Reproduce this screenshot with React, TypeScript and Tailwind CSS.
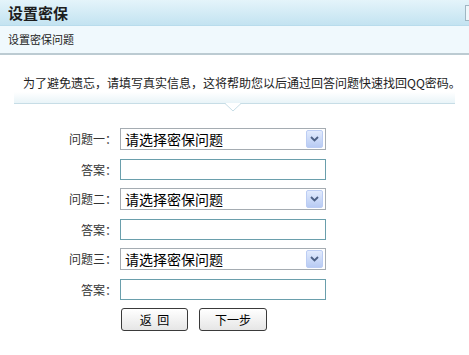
import React from 'react'

const FONT = '"SimSun", "Noto Sans CJK SC", "Liberation Sans", sans-serif'

const QUESTIONS = ['问题一：', '问题二：', '问题三：']

function FakeSelect() {
  return (
    <div className="flex h-[22px] w-[206px] items-center border border-[#a5acb2] bg-white pl-[4px] pr-[2px]">
      <span className="flex-1 text-[14px] leading-none text-black">请选择密保问题</span>
      <span className="flex h-[18px] w-[17px] items-center justify-center rounded-[2px] border border-[#bccdf4] bg-gradient-to-b from-[#e2ebfd] to-[#b8cbf3]">
        <svg width="9" height="6" viewBox="0 0 9 6">
          <path d="M1 1 L4.5 4.5 L8 1" fill="none" stroke="#4d6185" strokeWidth="1.8" />
        </svg>
      </span>
    </div>
  )
}

function Row({ label, children }: { label: string; children: React.ReactNode }) {
  return (
    <div className="flex items-center">
      <span className="w-[118px] pr-[1px] text-right text-[12px] leading-none text-[#333]">{label}</span>
      <div className="ml-[2px]">{children}</div>
    </div>
  )
}

export default function App() {
  return (
    <div className="h-[355px] w-[469px] overflow-hidden bg-white" style={{ fontFamily: FONT }}>
      <div className="flex h-[26px] items-center overflow-hidden border-b border-[#b9dcec] bg-gradient-to-b from-[#e4f4fa] to-[#c3e3f1] pl-[8px]">
        <span className="text-[15px] font-bold leading-none text-[#1d1d1d]">设置密保</span>
        <span className="ml-auto mr-[-16px] h-[16px] w-[20px] border border-[#9fb6c2] bg-[#eef7fb]" />
      </div>
      <div className="flex h-[29px] items-center border-b-2 border-[#bccbd2] bg-[#f0f9fd] pl-[8px]">
        <span className="text-[11px] leading-none text-[#222]">设置密保问题</span>
      </div>

      <p className="mt-[22px] whitespace-nowrap pl-[23px] text-[12px] leading-none text-[#222]">
        为了避免遗忘，请填写真实信息，这将帮助您以后通过回答问题快速找回QQ密码。
      </p>
      <div className="relative mx-[14px] mt-[3px] h-[12px] border-b border-[#c7dde6] bg-gradient-to-b from-white to-[#e9f4f8]">
        <svg className="absolute left-[211px] top-[11px]" width="16" height="9" viewBox="0 0 16 9">
          <path d="M0 0.5 L8 8 L16 0.5" fill="white" stroke="#c7dde6" strokeWidth="1" />
          <rect x="1" y="0" width="14" height="1" fill="white" />
        </svg>
      </div>

      <div className="mt-[24px] flex flex-col">
        {QUESTIONS.map((q, i) => (
          <div key={q} className={i === 0 ? 'flex flex-col' : 'mt-[8px] flex flex-col'}>
            <Row label={q}>
              <FakeSelect />
            </Row>
            <div className="mt-[9px]">
              <Row label="答案：">
                <div className="h-[21px] w-[206px] border border-[#6a9fac] bg-white" />
              </Row>
            </div>
          </div>
        ))}
        <div className="mt-[8px] flex pl-[121px]">
          <button className="flex h-[23px] w-[67px] items-center justify-center rounded-[3px] border border-[#3a3a3a] bg-gradient-to-b from-white to-[#e6e6e6] text-[12px] leading-none text-black">
            返&nbsp;&nbsp;回
          </button>
          <button className="ml-[11px] flex h-[23px] w-[68px] items-center justify-center rounded-[3px] border border-[#3a3a3a] bg-gradient-to-b from-white to-[#e6e6e6] text-[12px] leading-none text-black">
            下一步
          </button>
        </div>
      </div>
    </div>
  )
}
